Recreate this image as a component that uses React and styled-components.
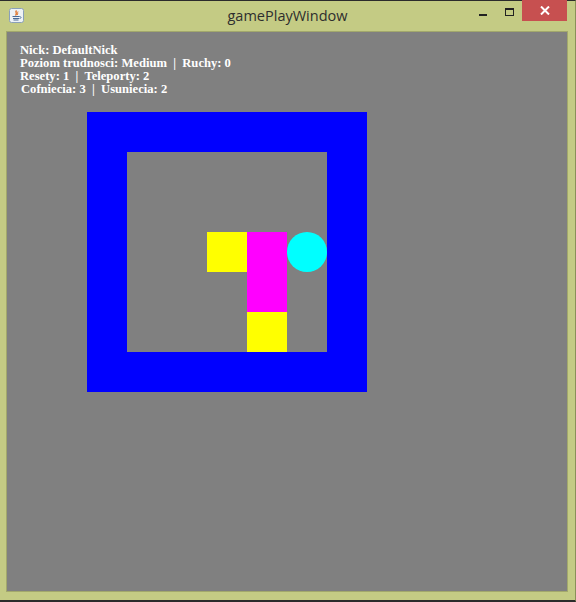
import styled, { createGlobalStyle } from "styled-components";

const GlobalStyle = createGlobalStyle`
  html, body {
    margin: 0;
    padding: 0;
    background: #c4cb84;
  }
`;

const LEVEL = [
  "WWWWWWW",
  "W.....W",
  "W.....W",
  "W..YMCW",
  "W...M.W",
  "W...Y.W",
  "WWWWWWW",
];

const COLORS = {
  W: "#0000ff",
  Y: "#ffff00",
  M: "#ff00ff",
  ".": "transparent",
  C: "transparent",
};

const JavaIcon = () => (
  <svg width="15" height="15" viewBox="0 0 15 15">
    <rect x="0.5" y="0.5" width="14" height="14" rx="2" fill="#eef2f6" stroke="#8aa0b8" />
    <path d="M7.5 2.5 C5.5 4.5 9 5 6.5 7.5" stroke="#e06a1a" strokeWidth="1.3" fill="none" />
    <path d="M9 3.5 C8 5 9.5 5.5 8 7" stroke="#e06a1a" strokeWidth="1" fill="none" />
    <path d="M3.5 8.5 H10.5 M4 10.5 H10 M4.5 12 H9.5" stroke="#4a6a96" strokeWidth="1" />
    <path d="M10.5 8.5 C12.5 8.5 12.5 10.5 10.5 10.5" stroke="#4a6a96" strokeWidth="0.9" fill="none" />
  </svg>
);

const App = () => {
  return (
    <Window>
      <GlobalStyle />
      <TitleBar>
        <TitleIcon>
          <JavaIcon />
        </TitleIcon>
        <Title>gamePlayWindow</Title>
        <Controls>
          <MinButton>
            <MinGlyph />
          </MinButton>
          <MaxButton>
            <MaxGlyph />
          </MaxButton>
          <CloseButton>
            <svg width="10" height="9" viewBox="0 0 10 9">
              <path d="M1 0.5 L9 8.5 M9 0.5 L1 8.5" stroke="#fff" strokeWidth="2" />
            </svg>
          </CloseButton>
        </Controls>
      </TitleBar>
      <Content>
        <Stats>
          <Line>Nick: DefaultNick</Line>
          <Line>Poziom trudnosci: Medium  |  Ruchy: 0</Line>
          <Line>Resety: 1  |  Teleporty: 2</Line>
          <Line $indent>Cofniecia: 3  |  Usuniecia: 2</Line>
        </Stats>
        <Board>
          {LEVEL.map((row, r) =>
            row.split("").map((ch, c) => (
              <Cell key={`${r}-${c}`} $color={COLORS[ch]}>
                {ch === "C" && <Ball />}
              </Cell>
            ))
          )}
        </Board>
      </Content>
      <BottomFrame />
    </Window>
  );
};

const Window = styled.div`
  width: 576px;
  height: 602px;
  box-sizing: border-box;
  display: flex;
  flex-direction: column;
  background: #c4cb84;
  border-top: 1px solid #2b2b2b;
  border-bottom: 2px solid #2b2b2b;
  border-right: 1px solid #8a9058;
`;

const TitleBar = styled.div`
  height: 30px;
  display: flex;
  align-items: flex-start;
  position: relative;
  padding-left: 9px;
`;

const TitleIcon = styled.div`
  margin-top: 7px;
  width: 15px;
  height: 15px;
  display: flex;
`;

const Title = styled.div`
  position: absolute;
  left: 0;
  right: 0;
  top: 5px;
  text-align: center;
  font-family: "Open Sans", "Noto Sans", sans-serif;
  font-size: 14.5px;
  color: #2e2e2e;
  pointer-events: none;
`;

const Controls = styled.div`
  margin-left: auto;
  display: flex;
  margin-top: -1px;
  margin-right: 8px;
`;

const MinButton = styled.div`
  width: 26px;
  height: 21px;
  display: flex;
  align-items: flex-start;
  justify-content: center;
`;

const MinGlyph = styled.div`
  margin-top: 14px;
  width: 8px;
  height: 2px;
  background: #222;
`;

const MaxButton = styled.div`
  width: 26px;
  height: 21px;
  display: flex;
  align-items: flex-start;
  justify-content: center;
`;

const MaxGlyph = styled.div`
  margin-top: 8px;
  width: 7px;
  height: 5px;
  border: 1px solid #222;
  border-top-width: 2px;
`;

const CloseButton = styled.div`
  width: 45px;
  height: 21px;
  background: #c75050;
  display: flex;
  align-items: center;
  justify-content: center;
`;

const Content = styled.div`
  flex: 1;
  margin: 0 7px 0 6px;
  background: #808080;
  border: 1px solid #a2a86c;
  display: flex;
  flex-direction: column;
  padding: 12px 0 0 13px;
`;

const Stats = styled.div`
  display: flex;
  flex-direction: column;
  font-family: "Liberation Serif", "Times New Roman", serif;
  font-weight: bold;
  font-size: 12.6px;
  line-height: 13px;
  color: #ffffff;
`;

const Line = styled.div`
  white-space: pre;
  padding-left: ${(p) => (p.$indent ? "1px" : "0")};
`;

const Board = styled.div`
  margin: 16px 0 0 67px;
  display: grid;
  grid-template-columns: repeat(7, 40px);
  grid-template-rows: repeat(7, 40px);
  width: 280px;
`;

const Cell = styled.div`
  background: ${(p) => p.$color};
  display: flex;
  align-items: center;
  justify-content: center;
`;

const Ball = styled.div`
  width: 40px;
  height: 40px;
  border-radius: 50%;
  background: #00ffff;
`;

const BottomFrame = styled.div`
  height: 8px;
`;

export default App;
